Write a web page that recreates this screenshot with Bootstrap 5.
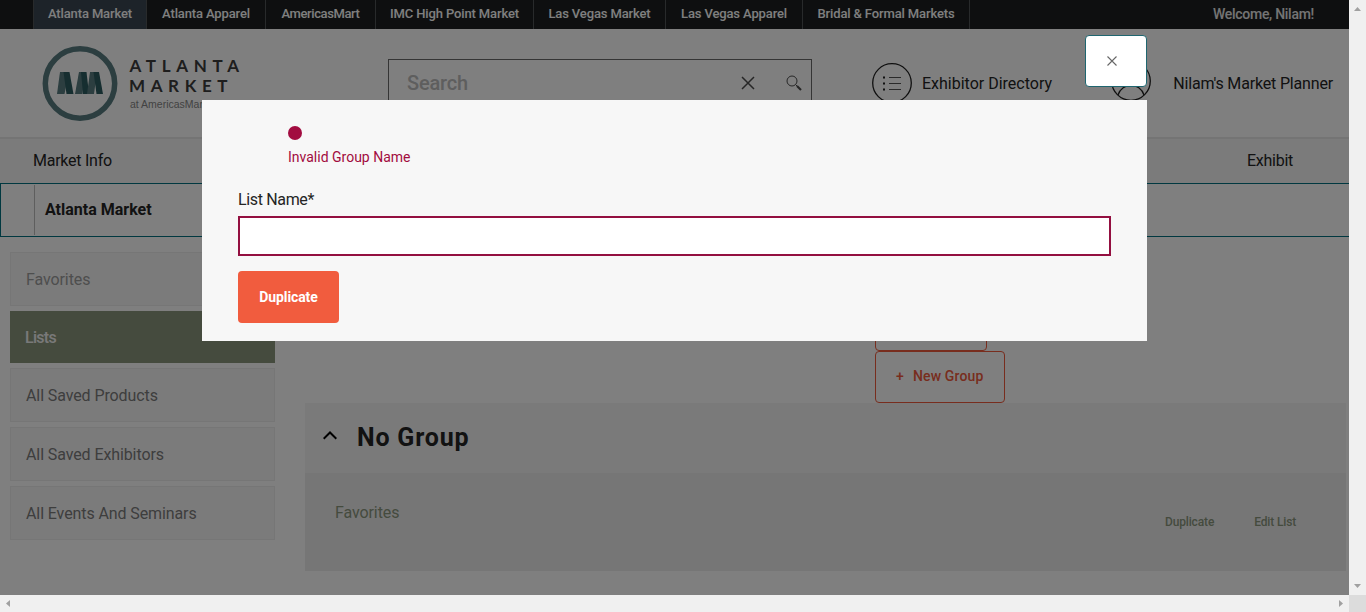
<!DOCTYPE html>
<html lang="en">
<head>
<meta charset="utf-8">
<title>Market Planner</title>
<link href="https://cdn.jsdelivr.net/npm/bootstrap@5.3.0/dist/css/bootstrap.min.css" rel="stylesheet">
<script src="https://cdn.jsdelivr.net/npm/bootstrap@5.3.0/dist/js/bootstrap.bundle.min.js"></script>
<style>
body{font-family:Roboto,"Liberation Sans",sans-serif;font-size:16px;line-height:20px;color:#242424;overflow:hidden}
.window{display:grid;grid-template:595px 17px / 1349px 17px;width:1366px;height:612px}
.sheet{position:relative;overflow:hidden;background:#fff}
.topbar{height:29px;background:#1c1f21;padding-left:33px;font-size:13px;font-weight:500;letter-spacing:-.13px}
.topbar a{color:#fff;height:29px;line-height:28px;border-right:1px solid #505456;text-align:center;text-decoration:none;white-space:nowrap;flex:none}
.topbar a.current{background:#3b4652;border-left:1px solid #505456}
.t1{width:114px}.t2{width:119px}.t3{width:110px}.t4{width:158px}.t5{width:132px}.t6{width:137px}.t7{width:167px}
.t3{letter-spacing:-.4px}
.welcome{line-height:28px;color:#e8e8e8;margin-right:35px;font-size:14px;letter-spacing:-.28px}
.masthead{height:110px;border-bottom:2px solid #e9e9e9}
.brandmark{margin:16px 0 0 41px;flex:none}
.searchbox{width:424px;height:50px;margin:30px 0 0 138px;border:1px solid #6a6a6a;flex:none;padding-bottom:2px}
.searchbox span{font-size:20px;font-weight:500;color:#bcbcbc;margin-left:18px;letter-spacing:-.2px}
.quick{white-space:nowrap;flex:none;height:108px}
.quick span{padding-top:2px}
.planner{margin-right:16px;letter-spacing:-.17px}
.planner svg{margin:-4px 22px 0 0}
.mainnav{height:44px;background:#f6f6f6;line-height:43px;padding:0 56px 0 33px;letter-spacing:-.25px}
.showbar{height:54px;border:1px solid #007080;border-right:0;font-weight:700}
.showbar div{border-left:1px solid #bdbdbd;margin:1px 0 0 33px;height:50px;line-height:50px;padding-left:10px}
.side{width:265px;margin:15px 0 0 10px;gap:5px;flex:none;letter-spacing:-.1px}
.side .entry{height:54px;border:1px solid #ededed;background:#f7f7f7;color:#7c7c7c;padding-left:15px;line-height:53px;text-decoration:none}
.side .entry.active{height:52px;border:0;background:#8a967d;color:#f2f2f2;font-weight:500;letter-spacing:-.7px}
.side .entry.muted{color:#9c9c9c!important}
.lists{width:1041px;margin-left:30px;padding-top:62px}
.actions{margin-left:570px;width:130px}
.outline{height:52px;border:1px solid #f05a3c;border-radius:4px;color:#f05a3c;font-size:14px;font-weight:500;line-height:49px;white-space:nowrap;letter-spacing:.15px}
.outline.short{width:112px}
.grouphead{height:70px;background:#f5f5f5;padding-left:18px}
.grouphead svg{margin-top:-4px}
.grouphead h2{font-size:25px;font-weight:700;margin:0 0 0 20px;letter-spacing:.8px}
.groupbody{height:98px;background:#ededed;color:#8a967d;padding:30px 50px 0 30px;letter-spacing:-.1px}
.groupbody small{font-size:12px;font-weight:500;margin-top:9px;letter-spacing:-.15px}
.shade{position:absolute;inset:0;background:rgba(0,0,0,.5)}
.dialog-box{position:absolute;left:202px;top:100px;width:945px;height:241px;background:#f7f7f7;padding:26px 36px 0}
.shut{position:absolute;right:0;top:-65px;width:62px;height:52px;background:#fff;border:1px solid #1f6670;border-radius:4px;padding:0}
.shut svg{display:block;margin:0 0 1px 20px}
.alert-note{margin-left:50px;color:#a20c40;font-size:14px}
.dot{width:14px;height:14px;border-radius:50%;background:#a20c40;margin-bottom:7px}
.field-label{margin-top:23px;letter-spacing:-.35px}
.name-field{height:40px;border:2px solid #930f40;border-radius:0;background:#fff;margin-top:6px}
.go{width:101px;height:52px;margin-top:15px;background:#f15c3e;color:#fff;border:0;border-radius:4px;font-size:14px;font-weight:700;padding:0;letter-spacing:-.1px}
.bar{background:#f0f0f0}
.corner{background:#dcdcdc}
.bar svg{display:block}
</style>
</head>
<body>
<div class="window">
<div class="sheet">
  <nav class="topbar d-flex">
    <a class="current t1">Atlanta Market</a><a class="t2">Atlanta Apparel</a><a class="t3">AmericasMart</a><a class="t4">IMC High Point Market</a><a class="t5">Las Vegas Market</a><a class="t6">Las Vegas Apparel</a><a class="t7">Bridal &amp; Formal Markets</a>
    <span class="welcome ms-auto">Welcome, Nilam!</span>
  </nav>
  <header class="masthead d-flex">
    <svg class="brandmark" width="209" height="78" viewBox="0 0 209 78">
      <circle cx="39" cy="38.500" r="34.700" fill="none" stroke="#587c80" stroke-width="5.500"/>
      <path d="M19 27h9l-4.500 22H16z" fill="#587c80"/><path d="M22.500 27h6l4 22h-7z" fill="#2c5c60"/>
      <path d="M38 27h6l-2.500 22H34z" fill="#587c80"/><path d="M40 27h5.500l2.500 22h-6z" fill="#2c5c60"/>
      <path d="M49 27h7l-3 22h-7z" fill="#587c80"/><path d="M52.500 27h5.500l4 22h-6.500z" fill="#2c5c60"/>
      <g font-family="Lato,sans-serif" font-weight="700" font-size="17" fill="#3d3d3d">
        <text x="88.500" y="27" textLength="109.500">ATLANTA</text><text x="88" y="46.500" textLength="98.500">MARKET</text>
      </g>
      <text x="89" y="62.500" font-family="Liberation Sans,sans-serif" font-size="10.500" fill="#858585">at AmericasMart</text>
    </svg>
    <div class="searchbox d-flex align-items-center">
      <span>Search</span>
      <svg class="ms-auto" width="14" height="14" viewBox="0 0 14 14" stroke="#4c4c4c" stroke-width="1.500"><path d="M1 1l12 12M13 1L1 13"/></svg>
      <svg style="margin:0 9px 0 31px" width="16" height="16" viewBox="0 0 16 16" fill="none" stroke="#4c4c4c"><circle cx="6" cy="6" r="5"/><path d="M9.500 9.500l1.500 1.500"/><path d="M11 11l4 4" stroke-width="2.200"/></svg>
    </div>
    <div class="quick d-flex align-items-center" style="margin-left:60px">
      <svg width="40" height="40" viewBox="0 0 40 40" fill="none" stroke="#202020"><circle cx="20" cy="20" r="19.300" stroke-width="1.300"/><path d="M17 14.500h12M17 20.500h12M17 26.500h12" stroke="#555"/><path d="M11 14.500h2M11 20.500h2M11 26.500h2" stroke-width="2"/></svg>
      <span style="margin-left:10px">Exhibitor Directory</span>
    </div>
    <div class="quick planner d-flex align-items-center ms-auto">
      <svg width="40" height="40" viewBox="0 0 40 40" fill="none" stroke="#202020" stroke-width="1.300"><circle cx="20" cy="20" r="19.300"/><circle cx="20" cy="15" r="7.500"/><path d="M7 34c4-13 22-13 26 0"/></svg>
      <span>Nilam's Market Planner</span>
    </div>
  </header>
  <nav class="mainnav d-flex justify-content-between"><span>Market Info</span><span>Exhibit</span></nav>
  <div class="showbar"><div>Atlanta Market</div></div>
  <div class="d-flex">
    <aside class="side d-flex flex-column">
      <a class="entry muted">Favorites</a><a class="entry active">Lists</a><a class="entry">All Saved Products</a><a class="entry">All Saved Exhibitors</a><a class="entry">All Events And Seminars</a>
    </aside>
    <main class="lists">
      <div class="actions">
        <div class="outline short"></div>
        <div class="outline"><span style="margin:0 9px 0 20px">+</span>New Group</div>
      </div>
      <div class="grouphead d-flex align-items-center">
        <svg width="14" height="10" viewBox="0 0 14 10" fill="none" stroke="#000" stroke-width="2"><path d="M.7 7.800L7 1.500l6.300 6.300"/></svg>
        <h2>No Group</h2>
      </div>
      <div class="groupbody d-flex"><span>Favorites</span><small class="ms-auto">Duplicate</small><small style="margin-left:40px">Edit List</small></div>
    </main>
  </div>
  <div class="shade"></div>
  <section class="dialog-box" role="dialog">
    <button class="shut" aria-label="Close"><svg width="12" height="12" viewBox="0 0 12 12" stroke="#666" stroke-width="1.100"><path d="M1.500 1.500l9 9M10.500 1.500l-9 9"/></svg></button>
    <div class="alert-note"><div class="dot"></div>Invalid Group Name</div>
    <label class="field-label d-block" for="ln">List Name*</label>
    <input id="ln" class="name-field w-100 d-block">
    <button class="go">Duplicate</button>
  </section>
</div>
<div class="bar d-flex flex-column justify-content-between">
  <svg width="17" height="17"><path d="M5 11h7L8.500 7z" fill="#a0a0a0"/></svg>
  <svg width="17" height="17"><path d="M5 6h7L8.500 10z" fill="#a0a0a0"/></svg>
</div>
<div class="bar d-flex justify-content-between">
  <svg width="17" height="17"><path d="M10 5v7L6 8.500z" fill="#a0a0a0"/></svg>
  <svg width="17" height="17"><path d="M7 5v7l4-3.500z" fill="#a0a0a0"/></svg>
</div>
<div class="corner"></div>
</div>
</body>
</html>
